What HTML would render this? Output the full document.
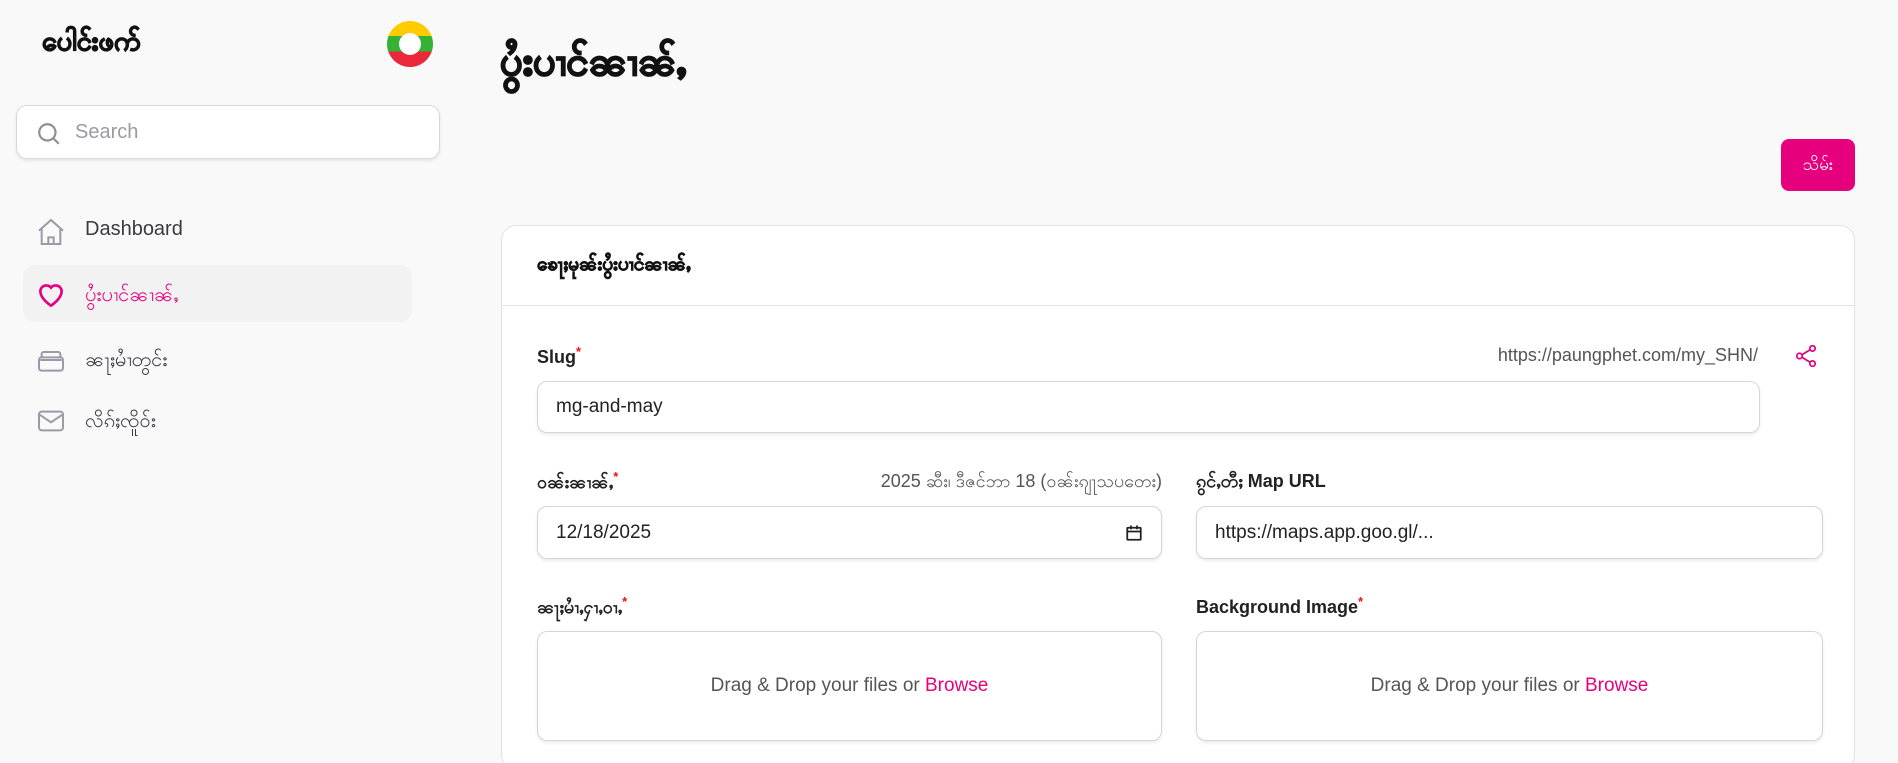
<!DOCTYPE html>
<html style="width:1898px;height:763px;overflow:hidden"><head><meta charset="utf-8"><style>
*{box-sizing:border-box;margin:0;padding:0}
body{width:1898px;height:763px;overflow:hidden;background:#f9f9f9;font-family:"Liberation Sans","Noto Sans CJK SC",sans-serif;color:#1f1f1f;position:relative}
.abs{position:absolute}
.logo{left:42px;top:24px;font-size:27px;font-weight:bold;color:#111;-webkit-text-stroke:1.2px #111}
.flag{left:387px;top:21px;width:46px;height:46px;border-radius:50%;background:linear-gradient(#fecb00 0 33%,#34b233 33% 66%,#ea2839 66%)}
.flag:after{content:"";position:absolute;left:12px;top:12px;width:22px;height:22px;border-radius:50%;background:#fff}
.search{left:16px;top:105px;width:424px;height:54px;background:#fff;border:1px solid #d8d8d8;border-radius:11px;box-shadow:0 2px 3px rgba(0,0,0,.08)}
.search span{position:absolute;left:58px;top:15px;font-size:20px;color:#9a9aa4}
.nav{left:23px;width:389px;height:57px;border-radius:12px;font-size:20px;color:#3a3a44}
.nav .t{position:absolute;left:62px;top:16px}
.nav svg{position:absolute;left:12px;top:14px}
.title{left:500px;top:36px;font-size:40px;font-weight:bold;color:#111;-webkit-text-stroke:1.6px #111}
.btn{left:1781px;top:139px;width:74px;height:52px;border-radius:8px;background:#e6007e;color:#fff;font-size:17px;text-align:center;line-height:52px}
.card{left:501px;top:225px;width:1354px;height:545px;background:#fff;border:1px solid #e3e3e3;border-radius:15px}
.hdr{position:absolute;left:0;right:0;top:0;height:80px;border-bottom:1px solid #e3e3e3}
.hdr span{position:absolute;left:35px;top:26px;font-size:19px;font-weight:bold;color:#111;-webkit-text-stroke:.8px #111}
.lbl{font-size:18px;font-weight:bold;color:#222}
.lbl sup{color:#e11;font-size:13px}
.hint{font-size:18px;color:#555}
.inp{background:#fff;border:1px solid #d6d6d6;border-radius:10px;box-shadow:0 2px 3px rgba(0,0,0,.08);font-size:19px;color:#222;padding-left:18px;display:flex;align-items:center}
.drop{background:#fff;border:1px solid #d6d6d6;border-radius:10px;box-shadow:0 2px 3px rgba(0,0,0,.08);font-size:19px;color:#555;text-align:center;line-height:108px}
.drop b{color:#e6007e;font-weight:normal}
</style></head><body>
<div class="abs logo">ပေါင်းဖက်</div>
<div class="abs flag"></div>
<div class="abs search"><svg style="position:absolute;left:19px;top:15px" width="26" height="26" viewBox="0 0 24 24" fill="none" stroke="#8e8e98" stroke-width="2"><circle cx="10.5" cy="10.5" r="7.5"/><path d="M16 16l5 5"/></svg><span>Search</span></div>

<div class="abs nav" style="top:202px"><svg width="32" height="32" viewBox="0 0 24 24" fill="none" stroke="#9a9aa8" stroke-width="1.5"><path d="M3 11l9-8 9 8M5 9.5V21h14V9.5M10 21v-5h4v5"/></svg><span class="t">Dashboard</span></div>
<div class="abs nav" style="top:265px;background:#f2f2f2;color:#e6007e"><svg width="32" height="32" viewBox="0 0 24 24" fill="none" stroke="#e6007e" stroke-width="2"><path d="M12 20s-8-5-8-11a4.5 4.5 0 0 1 8-2.5A4.5 4.5 0 0 1 20 9c0 6-8 11-8 11z"/></svg><span class="t">ပွႆးပၢင်ၼၢၼ်ႇ</span></div>
<div class="abs nav" style="top:330px"><svg width="32" height="32" viewBox="0 0 24 24" fill="none" stroke="#9a9aa8" stroke-width="1.5"><rect x="3" y="10" width="18" height="10" rx="2"/><path d="M5 10V7.5A1.5 1.5 0 0 1 6.5 6h11A1.5 1.5 0 0 1 19 7.5V10M4 12h16"/></svg><span class="t">ၼႃႈမၢႆတွင်း</span></div>
<div class="abs nav" style="top:391px"><svg width="32" height="32" viewBox="0 0 24 24" fill="none" stroke="#9a9aa8" stroke-width="1.5"><rect x="3" y="5" width="18" height="14" rx="2"/><path d="M3 7l9 6 9-6"/></svg><span class="t">လိၵ်ႈၸိူဝ်း</span></div>

<div class="abs title">ပွႆးပၢင်ၼၢၼ်ႇ</div>
<div class="abs btn">သိမ်း</div>

<div class="abs card">
<div class="hdr"><span>ၶေႃႈမုၼ်းပွႆးပၢင်ၼၢၼ်ႇ</span></div>
<div class="abs lbl" style="left:35px;top:118px">Slug<sup>*</sup></div>
<div class="abs hint" style="right:96px;top:119px">https://paungphet.com/my_SHN/</div>
<svg class="abs" style="left:1291px;top:117px" width="26" height="26" viewBox="0 0 24 24" fill="none" stroke="#e6007e" stroke-width="1.6"><circle cx="18" cy="5" r="2.5"/><circle cx="6" cy="12" r="2.5"/><circle cx="18" cy="19" r="2.5"/><path d="M8.2 10.8l7.6-4.6M8.2 13.2l7.6 4.6"/></svg>
<div class="abs inp" style="left:35px;top:155px;width:1223px;height:52px">mg-and-may</div>

<div class="abs lbl" style="left:35px;top:243px">ဝၼ်းၼၢၼ်ႇ<sup>*</sup></div>
<div class="abs hint" style="left:320px;width:340px;text-align:right;top:243px">2025 ဆီး၊ ဒီဇင်ဘာ 18 (ဝၼ်းၵျႃသပတေး)</div>
<div class="abs inp" style="left:35px;top:280px;width:625px;height:53px">12/18/2025<svg style="position:absolute;right:18px;top:17px" width="18" height="18" viewBox="0 0 24 24" fill="none" stroke="#222" stroke-width="2.4"><rect x="3" y="5" width="18" height="16" rx="1"/><path d="M3 10h18M8 2v5M16 2v5"/></svg></div>

<div class="abs lbl" style="left:694px;top:243px">ၵွင်ႇတီႈ Map URL</div>
<div class="abs inp" style="left:694px;top:280px;width:627px;height:53px">https://maps.app.goo.gl/...</div>

<div class="abs lbl" style="left:35px;top:368px">ၼႃႈမၢႆႇႁၢႇဝၢႇ<sup>*</sup></div>
<div class="abs drop" style="left:35px;top:405px;width:625px;height:110px">Drag &amp; Drop your files or <b>Browse</b></div>
<div class="abs lbl" style="left:694px;top:368px">Background Image<sup>*</sup></div>
<div class="abs drop" style="left:694px;top:405px;width:627px;height:110px">Drag &amp; Drop your files or <b>Browse</b></div>
</div>
</body></html>
